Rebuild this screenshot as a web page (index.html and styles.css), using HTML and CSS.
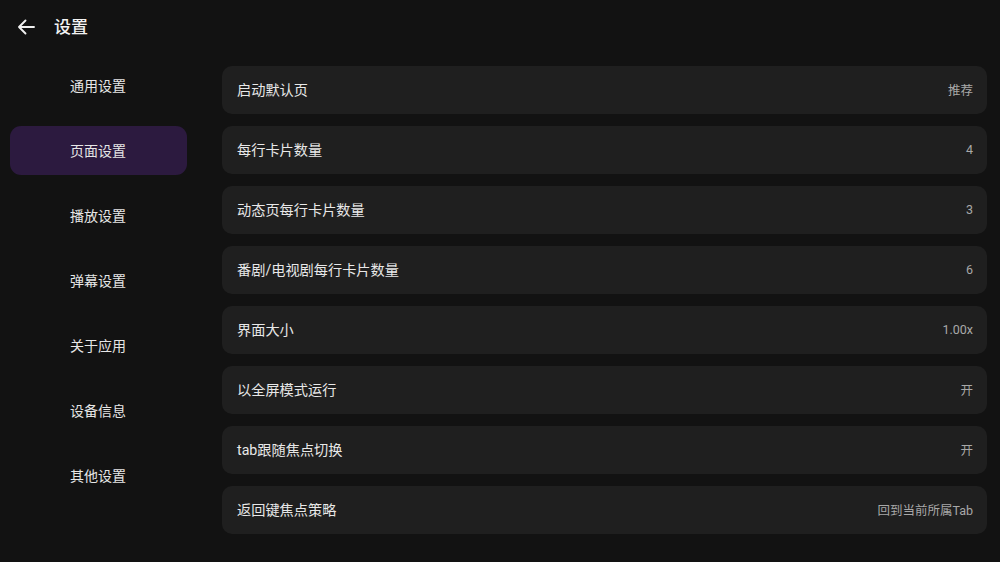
FILE: index.html
```html
<!DOCTYPE html>
<html lang="zh">
<head>
<meta charset="utf-8">
<link rel="stylesheet" href="styles.css">
</head>
<body>
<header class="topbar">
  <svg class="back" viewBox="0 0 18 16" width="18" height="16"><path d="M17 8H2M8.5 1.5L2 8l6.5 6.5" fill="none" stroke="#f0f0f0" stroke-width="1.9" stroke-linecap="round" stroke-linejoin="round"/></svg>
  <h1 class="title">设置</h1>
</header>
<main class="main">
  <nav class="side">
    <div class="nav-item">通用设置</div>
    <div class="nav-item active">页面设置</div>
    <div class="nav-item">播放设置</div>
    <div class="nav-item">弹幕设置</div>
    <div class="nav-item">关于应用</div>
    <div class="nav-item">设备信息</div>
    <div class="nav-item">其他设置</div>
  </nav>
  <section class="list">
    <div class="row"><span class="label">启动默认页</span><span class="value">推荐</span></div>
    <div class="row"><span class="label">每行卡片数量</span><span class="value">4</span></div>
    <div class="row"><span class="label">动态页每行卡片数量</span><span class="value">3</span></div>
    <div class="row"><span class="label">番剧/电视剧每行卡片数量</span><span class="value">6</span></div>
    <div class="row"><span class="label">界面大小</span><span class="value">1.00x</span></div>
    <div class="row"><span class="label">以全屏模式运行</span><span class="value">开</span></div>
    <div class="row"><span class="label">tab跟随焦点切换</span><span class="value">开</span></div>
    <div class="row"><span class="label">返回键焦点策略</span><span class="value">回到当前所属Tab</span></div>
  </section>
</main>
</body>
</html>
```
FILE: styles.css
```css
* { box-sizing: border-box; }
html, body {
  margin: 0;
  padding: 0;
  background: #121212;
  width: 1000px;
  height: 562px;
  overflow: hidden;
  font-family: Roboto, "Noto Sans CJK SC", sans-serif;
  color: #e8e8e8;
}
.topbar {
  height: 54px;
  display: flex;
  align-items: center;
  padding-left: 17px;
  gap: 19px;
}
.back { display: block; }
.title {
  margin: 0 0 4px 0;
  font-size: 17px;
  font-weight: 500;
  color: #f2f2f2;
}
.main {
  display: flex;
}
.side {
  width: 187px;
  padding: 7px 0 0 10px;
  display: flex;
  flex-direction: column;
  gap: 16px;
}
.nav-item {
  height: 49px;
  display: flex;
  align-items: center;
  padding: 0 0 1px 60px;
  font-size: 14px;
  color: #e6e6e6;
  border-radius: 11px;
}
.nav-item.active {
  background: #2c1a3f;
}
.list {
  margin-left: 35px;
  margin-top: 12px;
  width: 765px;
  display: flex;
  flex-direction: column;
  gap: 12px;
}
.row {
  height: 48px;
  background: #1f1f1f;
  border-radius: 10px;
  display: flex;
  align-items: center;
  justify-content: space-between;
  padding: 0 14px 2px 15px;
}
.label {
  font-size: 14.2px;
  color: #e8e8e8;
}
.value {
  font-size: 12.5px;
  color: #a8a8a8;
}
```
